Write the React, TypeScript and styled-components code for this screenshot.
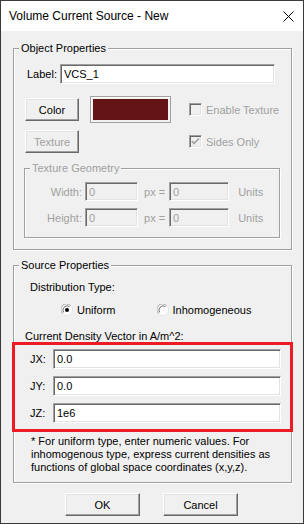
import React from 'react';
import styled, { createGlobalStyle } from 'styled-components';

const GlobalStyle = createGlobalStyle`
    html, body {
        margin: 0;
        padding: 0;
        background: #f0f0f0;
    }
    * {
        box-sizing: border-box;
    }
`;

const Window = styled.div`
    width: 304px;
    height: 524px;
    border: 1px solid #3a3a3a;
    background: #f0f0f0;
    display: flex;
    flex-direction: column;
    font-family: 'Liberation Sans', Arial, sans-serif;
    font-size: 11px;
    color: #000;
`;

const TitleBar = styled.div`
    height: 30px;
    flex: none;
    background: #fff;
    display: flex;
    align-items: center;
    justify-content: space-between;
    padding: 0 9px 0 8px;
    font-size: 12px;
`;

const Body = styled.div`
    padding: 17px 11px 0 12px;
    display: flex;
    flex-direction: column;
`;

const Group = styled.div<{ $top?: number }>`
    position: relative;
    margin-top: ${(p) => p.$top ?? 0}px;
    border: 1px solid #a0a0a0;
    box-shadow: 1px 1px 0 #fff, inset 1px 1px 0 #fff;
    padding: 0 11px;
    display: flex;
    flex-direction: column;
`;

const Legend = styled.span<{ $disabled?: boolean }>`
    position: absolute;
    top: -8px;
    left: 5px;
    padding: 0 2px;
    line-height: 14px;
    background: #f0f0f0;
    color: ${(p) => (p.$disabled ? '#a0a0a0' : '#000')};
`;

const Row = styled.div<{ $top?: number; $left?: number }>`
    display: flex;
    align-items: center;
    margin-top: ${(p) => p.$top ?? 0}px;
    padding-left: ${(p) => p.$left ?? 0}px;
`;

const Text = styled.span<{ $disabled?: boolean; $width?: number; $right?: boolean }>`
    color: ${(p) => (p.$disabled ? '#a0a0a0' : '#000')};
    width: ${(p) => (p.$width ? `${p.$width}px` : 'auto')};
    flex: none;
    text-align: ${(p) => (p.$right ? 'right' : 'left')};
    white-space: nowrap;
`;

const Field = styled.input<{ $width: number; $height?: number }>`
    width: ${(p) => p.$width}px;
    height: ${(p) => p.$height ?? 20}px;
    flex: none;
    margin: 0;
    padding: 0 0 0 3px;
    border: 1px solid;
    border-color: #a0a0a0 #fff #fff #a0a0a0;
    box-shadow: inset 1px 1px 0 #696969, inset -1px -1px 0 #e3e3e3;
    background: #fff;
    font-family: inherit;
    font-size: 11px;
    color: #000;
    outline: none;

    &:disabled {
        background: #f0f0f0;
        color: #a0a0a0;
    }
`;

const Button = styled.button<{ $width?: number }>`
    width: ${(p) => p.$width ?? 54}px;
    height: 23px;
    flex: none;
    margin: 0;
    padding: 0;
    border: 1px solid;
    border-color: #fff #696969 #696969 #fff;
    box-shadow: inset -1px -1px 0 #a0a0a0, inset 1px 1px 0 #e3e3e3;
    background: #f0f0f0;
    font-family: inherit;
    font-size: 11px;
    color: #000;

    &:disabled {
        color: #a0a0a0;
    }
`;

const Swatch = styled.div`
    width: 81px;
    height: 27px;
    flex: none;
    margin-left: 11px;
    border: 1px solid #a0a0a0;
    box-shadow: inset 1px 1px 0 #fff;
    padding: 2px;
    background: #f0f0f0;
`;

const SwatchFill = styled.div<{ $color: string }>`
    width: 100%;
    height: 100%;
    background: ${(p) => p.$color};
`;

const Check = styled.label<{ $left: number }>`
    display: flex;
    align-items: center;
    gap: 4px;
    margin-left: ${(p) => p.$left}px;
    color: #a0a0a0;
`;

const Box = styled.span`
    width: 13px;
    height: 13px;
    flex: none;
    border: 1px solid;
    border-color: #a0a0a0 #fff #fff #a0a0a0;
    box-shadow: inset 1px 1px 0 #696969, inset -1px -1px 0 #e3e3e3;
    background: #f0f0f0;
    display: flex;
    align-items: center;
    justify-content: center;
`;

const SubGroup = styled(Group)`
    margin-left: -1px;
    padding: 0 0 10px 0;
`;

const Spacer = styled.div<{ $height: number }>`
    height: ${(p) => p.$height}px;
    flex: none;
`;

const RedFrame = styled.div`
    margin: 0 -13px;
    border: 3px solid #ed1c24;
    padding: 4px 10px 6px 15px;
    display: flex;
    flex-direction: column;
    gap: 7px;
`;

const Radio = styled.label<{ $left: number }>`
    display: flex;
    align-items: center;
    gap: 4px;
    margin-left: ${(p) => p.$left}px;
`;

const Note = styled.p`
    margin: 3px 0 0 6px;
    padding-bottom: 8px;
    line-height: 13px;
    white-space: nowrap;
`;

const Footer = styled.div`
    display: flex;
    gap: 23px;
    margin-top: 10px;
    padding-left: 52px;
`;

const CheckBox = ({ checked }: { checked?: boolean }) => (
    <Box>
        {checked && (
            <svg width="9" height="9" viewBox="0 0 9 9">
                <path d="M1 4 L3 6.5 L8 1.5" fill="none" stroke="#a0a0a0" strokeWidth="1.6" />
            </svg>
        )}
    </Box>
);

const RadioDot = ({ checked }: { checked?: boolean }) => (
    <svg width="12" height="12" viewBox="0 0 12 12">
        <circle cx="6" cy="6" r="5.5" fill="#fff" />
        <path d="M1.5 9.5 A5.5 5.5 0 0 1 9.5 1.5" fill="none" stroke="#a0a0a0" />
        <path d="M2.6 8.4 A4.2 4.2 0 0 1 8.4 2.6" fill="none" stroke="#696969" />
        <path d="M9.9 2.1 A5.5 5.5 0 0 1 2.1 9.9" fill="none" stroke="#e3e3e3" />
        {checked && <circle cx="6" cy="6" r="2" fill="#000" />}
    </svg>
);

const CloseIcon = () => (
    <svg width="11" height="11" viewBox="0 0 11 11">
        <path d="M0.5 0.5 L10.5 10.5 M10.5 0.5 L0.5 10.5" stroke="#000" strokeWidth="1" />
    </svg>
);

const App: React.FC = () => {
    return (
        <>
            <GlobalStyle />
            <Window>
                <TitleBar>
                    <span>Volume Current Source - New</span>
                    <CloseIcon />
                </TitleBar>
                <Body>
                    <Group>
                        <Legend>Object Properties</Legend>
                        <Row $top={15} $left={2}>
                            <Text $width={33}>Label:</Text>
                            <Field $width={215} defaultValue="VCS_1" />
                        </Row>
                        <Row $top={12}>
                            <Button>Color</Button>
                            <Swatch>
                                <SwatchFill $color="#641414" />
                            </Swatch>
                            <Check $left={18}>
                                <CheckBox />
                                Enable Texture
                            </Check>
                        </Row>
                        <Row $top={7}>
                            <Button disabled>Texture</Button>
                            <Check $left={110}>
                                <CheckBox checked />
                                Sides Only
                            </Check>
                        </Row>
                        <SubGroup $top={15}>
                            <Legend $disabled>Texture Geometry</Legend>
                            <Row $top={13}>
                                <Text $disabled $right $width={60}>Width:&nbsp;</Text>
                                <Field $width={53} $height={19} disabled defaultValue="0" />
                                <Text $disabled $width={31}>&nbsp;&nbsp;px =</Text>
                                <Field $width={60} $height={19} disabled defaultValue="0" />
                                <Text $disabled>&nbsp;&nbsp;&nbsp;Units</Text>
                            </Row>
                            <Row $top={7}>
                                <Text $disabled $right $width={60}>Height:&nbsp;</Text>
                                <Field $width={53} $height={19} disabled defaultValue="0" />
                                <Text $disabled $width={31}>&nbsp;&nbsp;px =</Text>
                                <Field $width={60} $height={19} disabled defaultValue="0" />
                                <Text $disabled>&nbsp;&nbsp;&nbsp;Units</Text>
                            </Row>
                        </SubGroup>
                        <Spacer $height={11} />
                    </Group>

                    <Group $top={15}>
                        <Legend>Source Properties</Legend>
                        <Row $top={15} $left={5}>
                            <Text>Distribution Type:</Text>
                        </Row>
                        <Row $top={11}>
                            <Radio $left={36}>
                                <RadioDot checked />
                                Uniform
                            </Radio>
                            <Radio $left={41}>
                                <RadioDot />
                                Inhomogeneous
                            </Radio>
                        </Row>
                        <Row $top={14}>
                            <Text>Current Density Vector in A/m^2:</Text>
                        </Row>
                        <RedFrame>
                            <Row>
                                <Text $width={23}>JX:</Text>
                                <Field $width={228} defaultValue="0.0" />
                            </Row>
                            <Row>
                                <Text $width={23}>JY:</Text>
                                <Field $width={228} defaultValue="0.0" />
                            </Row>
                            <Row>
                                <Text $width={23}>JZ:</Text>
                                <Field $width={228} defaultValue="1e6" />
                            </Row>
                        </RedFrame>
                        <Note>
                            * For uniform type, enter numeric values. For
                            <br />
                            inhomogenous type, express current densities as
                            <br />
                            functions of global space coordinates (x,y,z).
                        </Note>
                    </Group>

                    <Footer>
                        <Button $width={75}>OK</Button>
                        <Button $width={75}>Cancel</Button>
                    </Footer>
                </Body>
            </Window>
        </>
    );
};

export default App;
